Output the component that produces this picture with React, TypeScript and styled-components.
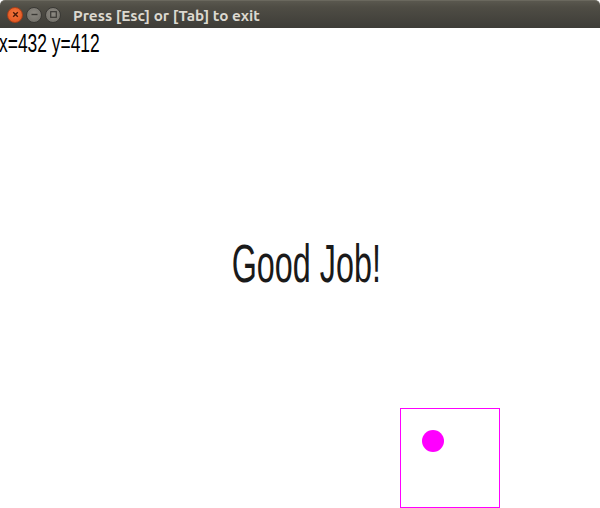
import React from "react";
import styled, { createGlobalStyle } from "styled-components";

const Global = createGlobalStyle`
  html, body { margin: 0; padding: 0; background: #ffffff; }
  body { width: 600px; height: 508px; overflow: hidden; }
`;

const Window = styled.div`
  width: 600px;
  height: 508px;
  display: flex;
  flex-direction: column;
  background: #ffffff;
`;

const TitleBar = styled.div`
  height: 28px;
  flex: 0 0 28px;
  display: flex;
  align-items: center;
  padding-left: 7px;
  background: linear-gradient(#5a584f 0px, #4f4d45 6px, #3d3c37 28px);
  border-top: 1px solid #6a685e;
  box-sizing: border-box;
  border-radius: 5px 5px 0 0;
`;

const Buttons = styled.div`
  display: flex;
  gap: 3px;
  margin-right: 12px;
`;

const WinButton = styled.div<{ $kind: "close" | "other" }>`
  width: 16px;
  height: 16px;
  border-radius: 50%;
  box-sizing: border-box;
  display: flex;
  align-items: center;
  justify-content: center;
  background: ${(p) =>
    p.$kind === "close"
      ? "radial-gradient(circle at 50% 40%, #f4793f, #df4f1a)"
      : "radial-gradient(circle at 50% 40%, #8c8982, #6d6b64)"};
  border: 1px solid ${(p) => (p.$kind === "close" ? "#a9401a" : "#3a3935")};
`;

const Title = styled.div`
  font-family: "Ubuntu", "Open Sans", "DejaVu Sans", sans-serif;
  font-weight: 700;
  font-size: 15.3px;
  color: #dcd9d0;
  padding-top: 1px;
  white-space: nowrap;
`;

const Canvas = styled.div`
  position: relative;
  flex: 1;
  display: flex;
  flex-direction: column;
  background: #ffffff;
`;

const Coords = styled.div`
  font-family: "Liberation Sans", Arial, sans-serif;
  font-size: 26px;
  line-height: 24px;
  color: #000;
  transform: scaleX(0.67);
  transform-origin: left top;
  white-space: nowrap;
  width: max-content;
  margin-top: 3px;
  margin-left: -1px;
`;

const Center = styled.div`
  flex: 1;
  display: flex;
  align-items: center;
  justify-content: center;
  padding-bottom: 36px;
  padding-left: 12px;
`;

const Message = styled.div`
  font-family: "Liberation Sans", Arial, sans-serif;
  font-size: 53px;
  line-height: 1;
  color: #1a1a1a;
  transform: scaleX(0.61);
  white-space: nowrap;
`;

const Box = styled.div`
  position: absolute;
  left: 400px;
  top: 380px;
  width: 100px;
  height: 100px;
  box-sizing: border-box;
  border: 1px solid #ff00ff;
`;

const Ball = styled.div`
  position: absolute;
  left: 21px;
  top: 21px;
  width: 22px;
  height: 22px;
  border-radius: 50%;
  background: #ff00ff;
`;

const CloseIcon = () => (
  <svg width="7" height="7" viewBox="0 0 7 7">
    <path d="M1.2 1.2 L5.8 5.8 M5.8 1.2 L1.2 5.8" stroke="#4a1a08" strokeWidth="1.4" />
  </svg>
);
const MinIcon = () => (
  <svg width="7" height="7" viewBox="0 0 7 7">
    <path d="M0.5 3.5 H6.5" stroke="#3a3935" strokeWidth="1.4" />
  </svg>
);
const MaxIcon = () => (
  <svg width="7" height="7" viewBox="0 0 7 7">
    <rect x="0.7" y="0.7" width="5.6" height="5.6" fill="none" stroke="#3a3935" strokeWidth="1.2" />
  </svg>
);

export default function App() {
  return (
    <>
      <Global />
      <Window>
        <TitleBar>
          <Buttons>
            <WinButton $kind="close"><CloseIcon /></WinButton>
            <WinButton $kind="other"><MinIcon /></WinButton>
            <WinButton $kind="other"><MaxIcon /></WinButton>
          </Buttons>
          <Title>Press [Esc] or [Tab] to exit</Title>
        </TitleBar>
        <Canvas>
          <Coords>x=432 y=412</Coords>
          <Center>
            <Message>Good Job!</Message>
          </Center>
          <Box>
            <Ball />
          </Box>
        </Canvas>
      </Window>
    </>
  );
}
